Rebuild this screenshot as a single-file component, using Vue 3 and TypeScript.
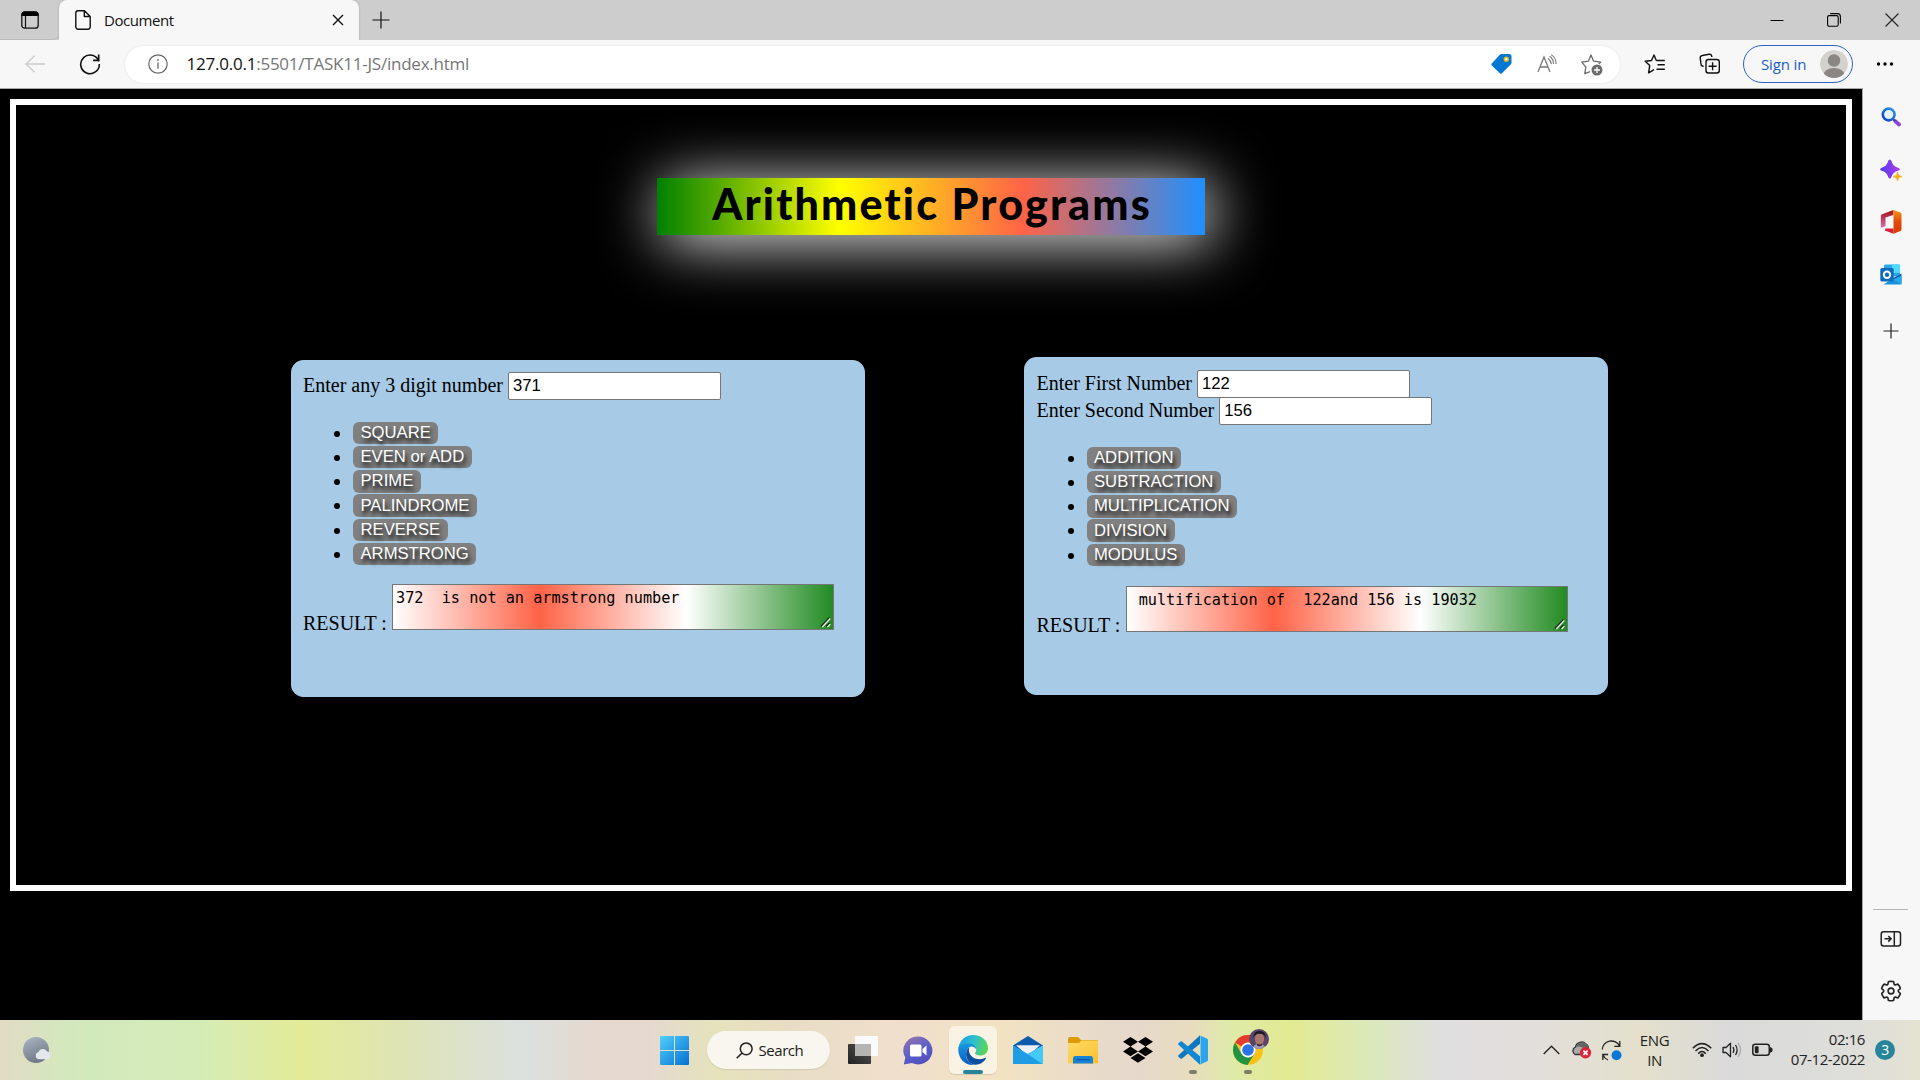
<script setup lang="ts">
import { ref } from 'vue'

const digitOps: string[] = ['SQUARE', 'EVEN or ADD', 'PRIME', 'PALINDROME', 'REVERSE', 'ARMSTRONG']
const pairOps: string[] = ['ADDITION', 'SUBTRACTION', 'MULTIPLICATION', 'DIVISION', 'MODULUS']

const digits = ref('371')
const first = ref('122')
const second = ref('156')
const digitResult = ref('372  is not an armstrong number')
const pairResult = ref(' multification of  122and 156 is 19032')
</script>

<template>
  <div class="screen">
    <header class="tabstrip">
      <div class="workspaces">
        <svg width="20" height="20" viewBox="0 0 20 20"><rect x="1.8" y="1.8" width="16.4" height="16.4" rx="3" fill="none" stroke="#111" stroke-width="1.3" /><path d="M1.5 6V4.5a3 3 0 0 1 3-3h11a3 3 0 0 1 3 3V6z" fill="#000" /><path d="M5.5 6v12" stroke="#111" stroke-width="1.2" /></svg>
      </div>
      <div class="tab">
        <svg class="doc" width="16" height="20" viewBox="0 0 16 20"><path d="M3 .8h6.500L15.200 6.500V17a2.200 2.200 0 0 1-2.200 2.200H3A2.200 2.200 0 0 1 .8 17V3A2.200 2.200 0 0 1 3 .8zM9.300 1v5.500h5.700" fill="none" stroke="#111" stroke-width="1.400" stroke-linejoin="round" /></svg>
        <span class="tab-title">Document</span>
        <svg class="tab-close" width="12" height="12" viewBox="0 0 12 12"><path d="M1 1l10 10M11 1L1 11" stroke="#111" stroke-width="1.400" /></svg>
      </div>
      <svg class="newtab" width="18" height="18" viewBox="0 0 18 18"><path d="M9 .5v17M.5 9h17" stroke="#111" stroke-width="1.200" /></svg>
      <div class="wincontrols">
        <svg width="14" height="14" viewBox="0 0 14 14"><path d="M.5 7.500h13" stroke="#000" stroke-width="1" /></svg>
        <svg width="14" height="14" viewBox="0 0 14 14"><rect x=".6" y="2.600" width="10.600" height="10.600" rx="1.500" fill="none" stroke="#000" stroke-width="1.100" /><path d="M3.200.6h7.200a3 3 0 0 1 3 3v7" fill="none" stroke="#000" stroke-width="1.100" /></svg>
        <svg width="14" height="14" viewBox="0 0 14 14"><path d="M.5.5l13 13M13.500.5l-13 13" stroke="#222" stroke-width="1.100" /></svg>
      </div>
    </header>

    <div class="toolbar">
      <svg class="back" width="20" height="18" viewBox="0 0 20 18"><path d="M9.500.7L1 9l8.500 8.300M1 9h18.800" fill="none" stroke="#ccc" stroke-width="1.300" /></svg>
      <svg class="reload" width="22" height="22" viewBox="0 0 22 22"><path d="M19.800 8.300A9.300 9.300 0 1 0 20.300 11" fill="none" stroke="#111" stroke-width="1.600" /><path d="M19.700 1.600v5.800h-5.600" fill="none" stroke="#111" stroke-width="1.600" /></svg>
      <div class="address">
        <svg class="info" width="20" height="20" viewBox="0 0 20 20"><circle cx="10" cy="10" r="9.200" fill="none" stroke="#666" stroke-width="1.200" /><path d="M10 8.500v6.200" stroke="#666" stroke-width="1.300" /><circle cx="10" cy="5.900" r=".9" fill="#666" /></svg>
        <span class="url"><b>127.0.0.1</b>:5501/TASK11-JS/index.html</span>
        <svg class="tag" width="22" height="22" viewBox="0 0 22 22"><path d="M11.500 1h7.500a2.500 2.500 0 0 1 2.500 2.500V9.800a2 2 0 0 1-.6 1.400l-9 9a1.500 1.500 0 0 1-2.100 0l-8-7.600a1.500 1.500 0 0 1 0-2.100L10 1.600A2 2 0 0 1 11.500 1z" fill="#0078d4" /><circle cx="16.300" cy="6.200" r="2" fill="#fff" stroke="#eab308" stroke-width="1.500" /></svg>
        <svg class="read" width="20" height="20" viewBox="0 0 20 20"><path d="M1 18L7 3l6 15M3.200 13h7.700" fill="none" stroke="#777" stroke-width="1.300" /><path d="M11 4.500q3 2.200 3.300 5.500M12.600 2.300q3.800 2.700 4 7.700M14.200.6q5 3.200 4.900 9.400" fill="none" stroke="#777" stroke-width="1.100" /></svg>
        <svg class="fav" width="22" height="22" viewBox="0 0 22 22"><path d="M9 19.200l-5.200 2 1-6.600L.8 9.600l6.600-.9L10 2.500l2.600 6.200 7.200.9-2 1.800" transform="translate(0 -1.500)" fill="none" stroke="#6b6b6b" stroke-width="1.300" stroke-linejoin="round" /><circle cx="16" cy="16" r="5.500" fill="#6b6b6b" /><path d="M16 13v6M13 16h6" stroke="#fff" stroke-width="1.300" /></svg>
      </div>
      <svg class="favlist" width="22" height="20" viewBox="0 0 22 20"><path d="M12.300 6.500L10 1 7.500 6.500l-6.300.8 4.500 4.300L4.600 18.800 10 15.600M12.300 6.500h8.500M13.500 10.800h7.300M12.500 15.200h8.300" fill="none" stroke="#111" stroke-width="1.400" stroke-linejoin="round" /></svg>
      <svg class="collect" width="22" height="22" viewBox="0 0 22 22"><path d="M4.500 13.500L3.300 13A2 2 0 0 1 2 11L1.200 5.300A2.500 2.500 0 0 1 3.300 2.500L10 1.300A2.500 2.500 0 0 1 12.800 3.200V4" fill="none" stroke="#111" stroke-width="1.400" /><rect x="7" y="6.500" width="13.300" height="13.500" rx="2.500" fill="none" stroke="#111" stroke-width="1.400" /><path d="M13.600 9.200v8M9.600 13.200h8" stroke="#111" stroke-width="1.400" /></svg>
      <div class="signin">
        <span>Sign in</span>
        <svg width="28" height="28" viewBox="0 0 28 28"><defs><clipPath id="av"><circle cx="14" cy="14" r="14" /></clipPath></defs><g clip-path="url(#av)"><circle cx="14" cy="14" r="14" fill="#d3d1ce" /><circle cx="14" cy="10.500" r="6.200" fill="#8b8683" /><ellipse cx="14" cy="25" rx="10.500" ry="7" fill="#8b8683" /></g></svg>
      </div>
      <svg class="more" width="18" height="6" viewBox="0 0 18 6"><circle cx="2.500" cy="3" r="1.700" /><circle cx="9" cy="3" r="1.700" /><circle cx="15.500" cy="3" r="1.700" /></svg>
    </div>

    <div class="main">
      <main class="page">
        <div class="frame">
          <h1>Arithmetic Programs</h1>
          <div class="cards">
            <section class="card left">
              <div class="field"><label>Enter any 3 digit number</label> <input v-model="digits"></div>
              <ul>
                <li v-for="op in digitOps" :key="op"><button>{{ op }}</button></li>
              </ul>
              <div class="result">
                <span class="result-label">RESULT :</span>
                <div class="output">
                  <textarea v-model="digitResult" spellcheck="false"></textarea>
                  <svg class="grip" width="12" height="12" viewBox="0 0 12 12"><path d="M.8 10.500L9.500 1.500M6 10.500l3.500-3.500" stroke="#222" stroke-width="1.300" /><path d="M2.300 11l8-8.500M7.500 11l2.800-2.800" stroke="#e4f1e4" stroke-width="1.300" /></svg>
                </div>
              </div>
            </section>
            <section class="card right">
              <div class="field"><label>Enter First Number</label> <input v-model="first"></div>
              <div class="field"><label>Enter Second Number</label> <input v-model="second"></div>
              <ul>
                <li v-for="op in pairOps" :key="op"><button>{{ op }}</button></li>
              </ul>
              <div class="result">
                <span class="result-label">RESULT :</span>
                <div class="output">
                  <textarea v-model="pairResult" spellcheck="false"></textarea>
                  <svg class="grip" width="12" height="12" viewBox="0 0 12 12"><path d="M.8 10.500L9.500 1.500M6 10.500l3.500-3.500" stroke="#222" stroke-width="1.300" /><path d="M2.300 11l8-8.500M7.500 11l2.800-2.800" stroke="#e4f1e4" stroke-width="1.300" /></svg>
                </div>
              </div>
            </section>
          </div>
        </div>
      </main>
      <aside class="sidebar">
        <svg class="s1" width="20" height="20" viewBox="0 0 20 20"><defs><linearGradient id="sg" x1="0" y1="1" x2="1" y2="0"><stop offset="0" stop-color="#0a3bd0" /><stop offset="1" stop-color="#2f9be0" /></linearGradient></defs><path d="M14.500 14.300l3.500 3.200" stroke="#8a45e0" stroke-width="3.800" stroke-linecap="round" /><path d="M11.500 11.500l2.500 2.500" stroke="#44307a" stroke-width="2" /><circle cx="7.700" cy="7.500" r="5.900" fill="#e6f3fb" stroke="url(#sg)" stroke-width="2.600" /></svg>
        <svg class="s2" width="22" height="22" viewBox="0 0 22 22"><defs><linearGradient id="dg" x1="0" x2="1"><stop offset="0" stop-color="#4c3df0" /><stop offset="1" stop-color="#b23cf0" /></linearGradient></defs><path d="M9.800.5q1.200 0 1.600 1.500 1.500 5.500 6.500 6.700 2 .5 2 1.500t-2 1.500q-5 1.200-6.500 6.400-.4 1.500-1.600 1.500t-1.600-1.500Q6.700 12.900 1.700 11.700q-1.600-.5-1.600-1.500t1.600-1.500Q6.700 7.500 8.200 2 8.600.5 9.800.5z" fill="url(#dg)" /><path d="M17.500 13l1.200 3.400 3.300 1.200-3.300 1.200-1.200 3.200-1.200-3.200-3.300-1.200 3.300-1.200z" fill="#f0b01a" stroke="#f0b01a" stroke-width=".6" stroke-linejoin="round" /></svg>
        <svg class="s3" width="22" height="24" viewBox="0 0 22 24"><defs><linearGradient id="og" x1="0" y1="0" x2="0" y2="1"><stop offset="0" stop-color="#a01010" /><stop offset="1" stop-color="#d870b8" /></linearGradient><linearGradient id="oo" x1="0" y1="0" x2="0" y2="1"><stop offset="0" stop-color="#f59a1c" /><stop offset=".5" stop-color="#e2480a" /><stop offset="1" stop-color="#d93c00" /></linearGradient></defs><path d="M13.500 0L2 4.200Q.8 5 .8 6.500V16q0 1.500 1 1.800L5.500 16V7.500L13.500 5z" fill="url(#og)" /><path d="M13.500 0l7 2.600q1 .5 1 1.700v15q0 1.200-1 1.700l-7 2.700z" fill="url(#oo)" /><path d="M5.500 18.600h8V23.800L4.800 20.400z" fill="#d91e3a" /></svg>
        <svg class="s4" width="22" height="21" viewBox="0 0 22 21"><rect x="4" y=".5" width="16" height="12" rx="1.500" fill="#28a8ea" /><path d="M12 .5h8V9h-8z" fill="#50d9ff" /><path d="M3.500 20.500h16.500a1.300 1.300 0 0 0 1.300-1.300V9.700L12 15z" fill="#1490df" /><path d="M21.300 9.700v10.500L12.500 14.600z" fill="#0a5da8" /><path d="M21.300 11.500v9L13 15.400z" fill="#28a8ea" /><rect x=".3" y="4" width="13.400" height="13.400" rx="1.500" fill="#0f6cbd" /><circle cx="7" cy="10.700" r="3.200" fill="none" stroke="#fff" stroke-width="2" /></svg>
        <svg class="s5" width="16" height="16" viewBox="0 0 16 16"><path d="M8 .5v15M.5 8h15" stroke="#222" stroke-width="1.200" /></svg>
        <div class="divider"></div>
        <svg class="s6" width="22" height="18" viewBox="0 0 22 18"><rect x="1.200" y="1.700" width="19.300" height="14.200" rx="2.500" fill="none" stroke="#222" stroke-width="1.500" /><path d="M14.300 2v14M4.500 8.800h6.300M8.300 6l2.800 2.800-2.800 2.800" fill="none" stroke="#222" stroke-width="1.500" /></svg>
        <svg class="s7" width="24" height="24" viewBox="0 0 24 24"><path d="M12.012 2.250c.734.008 1.465.093 2.182.253a.75.75 0 0 1 .582.649l.17 1.527a1.384 1.384 0 0 0 1.927 1.116l1.401-.615a.75.75 0 0 1 .85.174 9.792 9.792 0 0 1 2.204 3.792.75.75 0 0 1-.271.825l-1.242.916a1.381 1.381 0 0 0 0 2.226l1.243.915a.75.75 0 0 1 .272.826 9.797 9.797 0 0 1-2.204 3.792.75.75 0 0 1-.848.175l-1.407-.617a1.380 1.380 0 0 0-1.926 1.114l-.169 1.526a.75.75 0 0 1-.572.647 9.518 9.518 0 0 1-4.406 0 .75.75 0 0 1-.572-.647l-.168-1.524a1.382 1.382 0 0 0-1.926-1.110l-1.406.616a.75.75 0 0 1-.849-.175 9.798 9.798 0 0 1-2.204-3.796.75.75 0 0 1 .272-.826l1.243-.916a1.380 1.380 0 0 0 0-2.226l-1.243-.914a.75.75 0 0 1-.271-.826 9.793 9.793 0 0 1 2.204-3.792.75.75 0 0 1 .850-.174l1.400.615a1.387 1.387 0 0 0 1.930-1.118l.170-1.526a.75.75 0 0 1 .583-.650c.717-.159 1.450-.243 2.201-.252z" fill="none" stroke="#222" stroke-width="1.600" /><circle cx="12" cy="12" r="2.900" fill="none" stroke="#222" stroke-width="1.600" /></svg>
      </aside>
    </div>

    <footer class="taskbar">
      <svg class="weather" width="29" height="27" viewBox="0 0 29 27"><defs><linearGradient id="wg" x1="0" y1="0" x2=".4" y2="1"><stop offset="0" stop-color="#a9b6c2" /><stop offset="1" stop-color="#737b88" /></linearGradient></defs><circle cx="13" cy="13" r="13" fill="url(#wg)" /><path d="M15.500 22.300a3.800 3.800 0 0 1 0-7.300 4.800 4.800 0 0 1 8.400-.8 4.200 4.200 0 0 1 .8 8.100z" fill="#e3e7ee" /></svg>

      <div class="apps">
        <div class="slot">
          <svg width="29" height="29" viewBox="0 0 29 29"><defs><linearGradient id="win" x1="0" y1="0" x2="1" y2="1"><stop offset="0" stop-color="#4fd0fb" /><stop offset="1" stop-color="#0671d3" /></linearGradient></defs><path d="M1 0h13v14H0V1a1 1 0 0 1 1-1zM15 0h13a1 1 0 0 1 1 1v13H15zM0 15h14v14H1a1 1 0 0 1-1-1zM15 15h14v13a1 1 0 0 1-1 1H15z" fill="url(#win)" /></svg>
        </div>
        <div class="search">
          <svg width="17" height="17" viewBox="0 0 17 17"><circle cx="10.200" cy="6.800" r="5.900" fill="none" stroke="#222" stroke-width="1.500" /><path d="M6 11L.7 16.300" stroke="#222" stroke-width="1.600" /></svg>
          <span>Search</span>
        </div>
        <div class="slot">
          <svg width="30" height="28" viewBox="0 0 30 28"><defs><linearGradient id="tv" x1="0" y1="1" x2="1" y2="0"><stop offset="0" stop-color="#222" /><stop offset="1" stop-color="#555" /></linearGradient></defs><rect x="0" y="8" width="23" height="20" rx="1" fill="url(#tv)" /><rect x="7" y="0" width="23" height="20" rx="1" fill="#fafafa" /><rect x="7" y="8" width="16" height="12" fill="#b4b4b2" /></svg>
        </div>
        <div class="slot">
          <svg width="30" height="29" viewBox="0 0 30 29"><defs><linearGradient id="ct" x1="0" y1="0" x2=".5" y2="1"><stop offset="0" stop-color="#9a77ad" /><stop offset=".6" stop-color="#5b5fc7" /><stop offset="1" stop-color="#5152c0" /></linearGradient></defs><path d="M15 .5a14.200 14 0 1 1-6 26.600L.8 28.500l1.500-7A14.200 14 0 0 1 15 .5z" fill="url(#ct)" /><rect x="7" y="8.500" width="11.500" height="12" rx="1.500" fill="#fff" /><path d="M19.500 13l4-3.500v10l-4-3.500z" fill="#fff" /></svg>
        </div>
        <div class="slot active">
          <svg width="30" height="30" viewBox="0 0 30 30"><defs><linearGradient id="e1" x1="0" y1=".3" x2="1" y2=".5"><stop offset="0" stop-color="#1b9de2" /><stop offset=".5" stop-color="#2cc0cf" /><stop offset="1" stop-color="#5bd653" /></linearGradient><linearGradient id="e2" x1="0" y1="0" x2="0" y2="1"><stop offset="0" stop-color="#1697e0" /><stop offset="1" stop-color="#0a5fc4" /></linearGradient></defs><path d="M.3 13.500C1.200 5.800 7.500 0 15 0c9 0 15 6 15 13 0 5-3.500 7.500-7.500 7.500-3.700 0-5.500-1.300-5.500-2.300 0-.7 1.300-1.200 1.300-3.700 0-3-3-5.300-7-5.300C5.500 9.200.8 12 .3 13.500z" fill="url(#e1)" /><path d="M.2 13.500C1.500 10.300 6 8.500 11 8.500c4.500 0 7.300 3 7.300 6 0 0-1.800-3-4.800-3-3.500 0-5.500 4.500-5.500 8 0 5 3.500 9 8 10.300C7 30.800 0 23.500.2 13.500z" fill="url(#e2)" /><path d="M11.500 12c-2.500 1.600-3.700 5-3.400 8 .5 5 4 9.500 9.400 9.800 4.500 0 8.500-2.800 10.200-6 .5-1-.2-1.300-1-.9-6.500 3.200-13.500-.3-15.300-5-.7-2-.7-4.400.1-5.900z" fill="#0d4f9f" /></svg>
          <i class="run wide"></i>
        </div>
        <div class="slot">
          <svg width="30" height="28" viewBox="0 0 30 28"><path d="M0 9.500L15 0l15 9.500-15 12z" fill="#0b5cad" /><path d="M3 9.200h24L15 20z" fill="#eef1f5" /><path d="M0 9.500l15 8.500 15-8.500V27a1 1 0 0 1-1 1H1a1 1 0 0 1-1-1z" fill="#2aa5e6" /><path d="M15 18L30 9.500V26z" fill="#45c9f5" /><path d="M15 18L30 9.500V27a1 1 0 0 1-1 1z" fill="#45c9f5" /><path d="M0 9.800L29 28H1a1 1 0 0 1-1-1z" fill="#1f9ce4" /></svg>
        </div>
        <div class="slot">
          <svg width="30" height="27" viewBox="0 0 30 27"><defs><linearGradient id="fe" x1="0" y1="0" x2="1" y2="1"><stop offset="0" stop-color="#ffda6a" /><stop offset="1" stop-color="#fbbf2b" /></linearGradient></defs><path d="M0 2q0-2 2-2h8l3 3h15.500q1.500 0 1.500 1.500V12H0z" fill="#dc9c08" /><path d="M0 6h11l2.500-2.500H30V25.500a1 1 0 0 1-1 1H1a1 1 0 0 1-1-1z" fill="url(#fe)" /><path d="M5 26.500V21.500a2.500 2.500 0 0 1 2.500-2.500h15a2.500 2.500 0 0 1 2.500 2.500v5z" fill="#1683d6" /><path d="M8.500 22.700h13" stroke="#0b55a0" stroke-width="1.200" /></svg>
        </div>
        <div class="slot">
          <svg width="30" height="26" viewBox="0 0 30 26"><path d="M7.500 0L15 4.800 7.500 9.600 0 4.800zM22.500 0L30 4.800l-7.500 4.800L15 4.800zM7.500 9.600L15 14.400l-7.500 4.800L0 14.400zM22.500 9.600L30 14.400l-7.500 4.800-7.500-4.800zM15 16.200l7.500 4.700L15 25.700l-7.500-4.800z" fill="#000" /></svg>
        </div>
        <div class="slot">
          <svg width="30" height="30" viewBox="0 0 30 30"><path d="M22 .3v8.500L4 23.500q-.8.6-1.600 0L.5 21.700q-.7-.7 0-1.400L22 .3z" fill="#0f77c0" /><path d="M22 29.700V21.200L4 6.500q-.8-.6-1.600 0L.5 8.300q-.7.700 0 1.400L22 29.700z" fill="#1187d2" /><path d="M21.500.2l7.300 3.200q1.200.6 1.200 1.700v19.800q0 1.100-1.200 1.700L21.500 29.800q1-.5 1-2V2.200q0-1.500-1-2z" fill="#2ba3ef" /></svg>
          <i class="run"></i>
        </div>
        <div class="slot">
          <svg width="30" height="30" viewBox="0 0 30 30"><circle cx="15" cy="15" r="15" fill="#fbc116" /><path d="M15 15L2 7.500A15 15 0 0 1 28 7.500H15z" fill="#e33b2e" /><path d="M2 7.500A15 15 0 0 0 14.500 30L21.500 18.800 15 22.500 8.500 18.800z" fill="#229342" /><circle cx="15" cy="15" r="7.500" fill="#fff" /><circle cx="15" cy="15" r="5.800" fill="#2b74e8" /></svg>
          <svg class="profile" width="20" height="20" viewBox="0 0 20 20"><defs><clipPath id="pf"><circle cx="10" cy="10" r="10" /></clipPath></defs><g clip-path="url(#pf)"><rect width="20" height="20" fill="#59456b" /><path d="M4 20q0-5 6-5t7 5z" fill="#a29bb5" /><ellipse cx="10.500" cy="10" rx="4.600" ry="6.200" fill="#a8766b" /><path d="M4.500 9Q4 2 10.500 2t6.500 7q-1.500-3.500-4-4-4-.5-6 .5-2 1-2.500 3.500z" fill="#1e1828" /><path d="M8 14.500q2.500 2 5 0v2q-2.500 1.500-5 0z" fill="#3c2838" /></g></svg>
          <i class="run"></i>
        </div>
      </div>

      <div class="tray">
        <svg class="chev" width="17" height="10" viewBox="0 0 17 10"><path d="M.7 9l7.800-7.800L16.300 9" fill="none" stroke="#222" stroke-width="1.300" /></svg>
        <svg class="cloud" width="21" height="18" viewBox="0 0 21 18"><path d="M4 13.500a4.200 4.200 0 0 1 .5-7.500A6 6 0 0 1 15 3.200q2.500 1 2.300 4.300L12 13.500z" fill="#aaa" stroke="#333" stroke-width="1.300" /><path d="M5 6q4-1.500 8 1.500l4.500-.5Q17 2.500 12 1 6.500 1 5 6z" fill="#666" /><circle cx="14.500" cy="11.800" r="5.700" fill="#dc2638" /><path d="M12.400 9.700l4.200 4.200M16.600 9.700l-4.200 4.200" stroke="#fff" stroke-width="1.700" /></svg>
        <svg class="sync" width="21" height="21" viewBox="0 0 21 21"><path d="M1.300 9.500A9 8.500 0 0 1 18.500 6M18.800 1v5.300h-5.500M7 20Q3.500 18.500 2 15.300M1.800 20v-5.500h5.300" fill="none" stroke="#222" stroke-width="1.300" /><circle cx="15.500" cy="15.300" r="5" fill="#0b78d8" /></svg>
        <div class="lang"><span>ENG</span><span>IN</span></div>
        <svg class="wifi" width="20" height="16" viewBox="0 0 20 16"><path d="M.8 6.200Q10-3 19.200 6.200M3.500 9Q10 2.200 16.500 9M6.200 11.700Q10 7.500 13.800 11.700" fill="none" stroke="#222" stroke-width="1.500" /><circle cx="10" cy="13.200" r="1.900" fill="#222" /></svg>
        <svg class="vol" width="20" height="16" viewBox="0 0 20 16"><path d="M1 5.500h3L8.500 1.200v13.600L4 10.500H1z" fill="none" stroke="#222" stroke-width="1.300" stroke-linejoin="round" /><path d="M11 5q1.800 3 0 6M13.500 3q3.300 5 0 10" fill="none" stroke="#222" stroke-width="1.300" /><path d="M16 1q5 7 0 14" fill="none" stroke="#aaa" stroke-width="1.300" /></svg>
        <svg class="bat" width="21" height="14" viewBox="0 0 21 14"><rect x=".8" y="1.200" width="16.500" height="11" rx="2.500" fill="none" stroke="#222" stroke-width="1.500" /><rect x="2.800" y="3.200" width="3.800" height="7" rx="1" fill="#222" /><path d="M17.800 4.500l2.200 1v2.800l-2.200 1z" fill="#222" stroke="#222" /></svg>
        <div class="clock"><span class="time">02:16</span><span class="date">07-12-2022</span></div>
        <div class="count">3</div>
      </div>
    </footer>
  </div>
</template>

<style>
html,
body {
  background: #000;
  overflow: hidden;
}
</style>

<style scoped>
.screen {
  width: 1920px;
  height: 1080px;
  display: flex;
  flex-direction: column;
  background: #f7f7f7;
  font-family: 'Open Sans', 'Noto Sans', sans-serif;
  overflow: hidden;
}
svg {
  display: block;
  flex: none;
}

/* tab strip */
.tabstrip {
  height: 40px;
  flex: none;
  display: flex;
  align-items: center;
  background: #cdcdcd;
}
.workspaces {
  width: 59px;
  height: 40px;
  box-sizing: border-box;
  padding: 10px 0 0 20px;
  border-radius: 0 0 6px 0;
  box-shadow: inset 0 -1px 0 #bbb;
}
.tab {
  width: 300px;
  height: 40px;
  box-sizing: border-box;
  padding: 0 15px 0 16px;
  display: flex;
  align-items: center;
  background: #f7f7f7;
  border-radius: 8px 8px 0 0;
  box-shadow: 0 0 2px #999;
  clip-path: inset(0 -3px 0 -3px);
}
.tab-title {
  margin-left: 13px;
  margin-top: -1px;
  flex: 1;
  font-size: 15px;
  line-height: 20px;
  letter-spacing: -0.45px;
  color: #111;
}
.newtab {
  margin: -1px 0 0 13px;
}
.wincontrols {
  margin-left: auto;
  padding-right: 21.500px;
  display: flex;
  gap: 43.500px;
}

/* toolbar */
.toolbar {
  height: 48px;
  flex: none;
  display: flex;
  align-items: center;
}
.back {
  margin-left: 25px;
}
.reload {
  margin-left: 34px;
}
.address {
  width: 1495px;
  height: 37px;
  margin-left: 24px;
  border-radius: 19px;
  background: #fff;
  display: flex;
  align-items: center;
  box-shadow: 0 0 2px #ddd;
}
.info {
  margin-left: 22.500px;
}
.url {
  margin: -2px 0 0 19px;
  flex: 1;
  font-size: 17px;
  letter-spacing: -0.23px;
  color: #767676;
  white-space: nowrap;
}
.url b {
  font-weight: 400;
  color: #111;
}
.read {
  margin-left: 25px;
}
.fav {
  margin: 2px 17px 0 24px;
}
.favlist {
  margin-left: 24px;
}
.collect {
  margin-left: 33px;
}
.signin {
  width: 110px;
  height: 38px;
  box-sizing: border-box;
  margin-left: 22px;
  padding: 0 4.500px 0 17px;
  border: 1.500px solid #2a64c5;
  border-radius: 19px;
  display: flex;
  align-items: center;
  justify-content: space-between;
  font-size: 15px;
  letter-spacing: -0.15px;
  color: #1b5ccc;
}
.signin span {
  margin-top: -1px;
}
.more {
  margin-left: 23px;
}

/* viewport */
.main {
  height: 932px;
  flex: none;
  display: flex;
}
.page {
  width: 1863px;
  box-sizing: border-box;
  border-top: 1px solid #a8a8a8;
  border-right: 1px solid #a8a8a8;
  background: #000;
  padding: 10px;
}
.frame {
  width: 1842px;
  height: 792px;
  box-sizing: border-box;
  border: 6px solid #fff;
}
h1 {
  width: 548px;
  height: 57px;
  margin: 73px auto 0;
  background: linear-gradient(to right, green, yellow, tomato, dodgerblue);
  box-shadow: 6px 6px 62px #fff;
  text-align: center;
  font-family: Lato, sans-serif;
  font-weight: 900;
  font-size: 43px;
  line-height: 52px;
  letter-spacing: 2.150px;
  text-indent: 2px;
  color: #000;
}
.cards {
  margin-top: 122px;
  padding-left: 275px;
  display: flex;
  align-items: flex-start;
  gap: 159px;
}
.card {
  box-sizing: border-box;
  border-radius: 12.500px;
  background: #a7cbe6;
  font-family: 'Liberation Serif', serif;
  font-size: 20px;
  color: #000;
}
.left {
  width: 574px;
  height: 337px;
  margin-top: 3px;
  padding: 12px;
}
.right {
  width: 584px;
  height: 338px;
  padding: 12.500px;
}
.field {
  height: 27.500px;
  line-height: 26px;
  white-space: nowrap;
}
input {
  width: 213px;
  height: 28px;
  box-sizing: border-box;
  margin: 0;
  padding: 2px 5px 2px 4px;
  border: 1px solid #767676;
  border-radius: 2px;
  vertical-align: top;
  font-family: 'Liberation Sans', sans-serif;
  font-size: 16.670px;
  color: #000;
  background: #fff;
}
ul {
  margin: 21px 0 19px;
  padding-left: 50px;
}
li {
  height: 24.300px;
  line-height: 24.300px;
}
button {
  height: 22.500px;
  margin: 1px 0 0;
  padding: 0 7.500px;
  border: 0;
  border-radius: 6px;
  background: #808080;
  color: #fff;
  font-family: 'Liberation Sans', sans-serif;
  font-size: 16.670px;
  line-height: 22px;
  text-shadow: 2px 4px 4px #000;
  vertical-align: top;
}
.result {
  display: flex;
  align-items: flex-end;
}
.result-label {
  width: 89px;
  line-height: 20px;
  margin-bottom: -3px;
}
.left .result {
  margin-top: -1px;
}
.output {
  position: relative;
}
textarea {
  display: block;
  width: 442px;
  height: 46px;
  box-sizing: border-box;
  margin: 0;
  padding: 3px;
  border: 1px solid #767676;
  background: linear-gradient(to right, white, tomato, white, forestgreen);
  font-family: 'DejaVu Sans Mono', monospace;
  font-size: 15.200px;
  line-height: 21px;
  color: #000;
  overflow: hidden;
  resize: none;
}
.grip {
  position: absolute;
  right: 2px;
  bottom: 2px;
}

/* side panel */
.sidebar {
  width: 57px;
  box-sizing: border-box;
  padding-right: 1.500px;
  display: flex;
  flex-direction: column;
  align-items: center;
}
.s1 { margin-top: 19px; }
.s2 { margin-top: 32px; }
.s3 { margin-top: 29px; }
.s4 { margin-top: 30px; }
.s5 { margin-top: 38px; margin-right: 0.500px; }
.divider {
  width: 35px;
  height: 1px;
  margin-top: 570px;
  background: #b5b5b5;
}
.s6 { margin-top: 20px; }
.s7 { margin-top: 31px; }

/* taskbar */
.taskbar {
  height: 60px;
  flex: none;
  display: flex;
  align-items: center;
  background: linear-gradient(90deg, #e2dac5 0, #d6e6be 55px, #d2e9bb 90px, #d6ecb8 200px, #e3eb98 300px, #dee4b4 400px, #dbe0de 520px, #e6d9cf 600px, #e5d9cf 650px, #e5e2bc 715px, #e8ddc4 790px, #f0dfcd 900px, #f1e3c2 1000px, #e6d8cc 1130px, #e8dcc0 1190px, #deeaa8 1230px, #e3ea92 1290px, #dbe9bb 1370px, #e0dfe0 1440px, #e2dedb 1530px, #e4e0cc 1640px, #dadada 1730px, #dededa 1850px, #e4e2d2 1920px);
}
.weather {
  margin-left: 23px;
}
.apps {
  margin-left: 595px;
  display: flex;
  align-items: center;
}
.slot {
  width: 55px;
  height: 60px;
  display: flex;
  align-items: center;
  justify-content: center;
  position: relative;
}
.active::before {
  content: '';
  position: absolute;
  left: 3.500px;
  top: 6px;
  width: 48px;
  height: 48px;
  border-radius: 6px;
  background: rgba(255, 252, 245, 0.65);
  box-shadow: 0 1px 1px rgba(0, 0, 0, 0.12);
}
.active svg {
  position: relative;
}
.run {
  position: absolute;
  bottom: 6px;
  left: 23.500px;
  width: 8px;
  height: 4px;
  border-radius: 2px;
  background: #7d7d68;
}
.run.wide {
  left: 17.500px;
  width: 20px;
  background: #27849a;
}
.profile {
  position: absolute;
  left: 28.500px;
  top: 9px;
}
.search {
  width: 123px;
  height: 38px;
  box-sizing: border-box;
  margin: 0 5.500px 0 5px;
  padding-left: 28.500px;
  border-radius: 19px;
  background: #f8f6ee;
  box-shadow: 0 1px 1px rgba(0, 0, 0, 0.1);
  display: flex;
  align-items: center;
  gap: 6px;
  font-size: 15px;
  letter-spacing: -0.45px;
  color: #1a1a1a;
}
.tray {
  margin-left: auto;
  padding-right: 25px;
  display: flex;
  align-items: center;
  font-size: 15px;
  line-height: 20px;
  letter-spacing: -0.4px;
  color: #222;
}
.cloud { margin-left: 11px; }
.sync { margin-left: 9px; }
.lang {
  width: 40px;
  margin: 0 0 1px 13px;
  display: flex;
  flex-direction: column;
  align-items: center;
}
.wifi { margin-left: 17px; }
.vol { margin-left: 10px; }
.bat { margin-left: 10px; }
.clock {
  width: 76px;
  margin: 0 0 2px 16.500px;
  display: flex;
  flex-direction: column;
  align-items: flex-end;
}
.count {
  width: 20px;
  height: 20px;
  margin-left: 10px;
  border-radius: 50%;
  background: #27849a;
  color: #fff;
  text-align: center;
  font-size: 14px;
}
</style>
